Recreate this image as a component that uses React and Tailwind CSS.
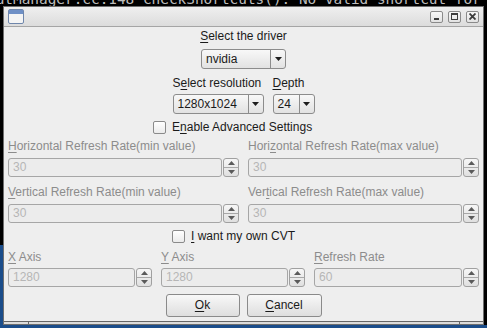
import React from 'react';

function Mn({ children }) {
  return <span className="underline decoration-1 underline-offset-[2px]">{children}</span>;
}

function Arrow({ up, color = '#1e1e1e' }) {
  return (
    <svg width="7" height="4" viewBox="0 0 7 4">
      <path d={up ? 'M0 4h7L3.5 0z' : 'M0 0h7L3.5 4z'} fill={color} />
    </svg>
  );
}

function Combo({ value, className = '' }) {
  return (
    <div className={`flex h-[20px] rounded-[3px] border border-[#8c8c8c] bg-linear-to-b from-[#f8f8f8] to-[#e2e2e2] ${className}`}>
      <div className="flex-1 pl-[4px] text-[12px] leading-[18px] text-[#1a1a1a]">{value}</div>
      <div className="flex w-[15px] items-center justify-center border-l border-[#8c8c8c]">
        <Arrow />
      </div>
    </div>
  );
}

function Spin({ value }) {
  return (
    <div className="flex h-[19px]">
      <div className="flex-1 rounded-[3px] border border-[#a6a6a6] bg-[#ececec] pl-[4px] text-[12px] leading-[17px] text-[#b6b6b6]">
        {value}
      </div>
      <div className="ml-[1px] flex w-[16px] flex-col overflow-hidden rounded-[3px] border border-[#a0a0a0] bg-linear-to-b from-[#f6f6f6] to-[#e0e0e0]">
        <div className="flex flex-1 items-center justify-center border-b border-[#a8a8a8]">
          <Arrow up color="#5a5a5a" />
        </div>
        <div className="flex flex-1 items-center justify-center">
          <Arrow color="#5a5a5a" />
        </div>
      </div>
    </div>
  );
}

function Check() {
  return <div className="h-[13px] w-[13px] rounded-[2px] border border-[#8a8a8a] bg-linear-to-b from-white to-[#ebebeb]" />;
}

function WinButton({ children }) {
  return (
    <div className="flex h-[12px] w-[13px] items-center justify-center rounded-[2px] border border-[#8a8a8a] bg-linear-to-b from-[#f7f7f7] to-[#e2e2e2]">
      {children}
    </div>
  );
}

export default function App() {
  return (
    <div className="relative h-[328px] w-[487px] overflow-hidden bg-black font-['Liberation_Sans',Arial,sans-serif]">
      {/* terminal behind the window */}
      <div className="absolute left-[-13px] top-[-10px] whitespace-pre font-['DejaVu_Sans_Mono',monospace] text-[14.4px] leading-[18px] text-[#bdbdbd]">
        cutManager.cc:148 checkShortcuts(): No valid shortcut for r
      </div>
      {/* desktop */}
      <div className="absolute bottom-0 left-0 h-[3px] w-full bg-[#1b4d8a]" />
      <div className="absolute bottom-0 left-0 top-[245px] w-[3px] bg-[#1b4d8a]" />

      {/* window */}
      <div className="absolute left-[3px] top-[6px] flex h-[319px] w-[481px] flex-col border border-[#6f6f6f] bg-[#eeeeee] text-[#1a1a1a]">
        {/* title bar */}
        <div className="flex h-[20px] items-center justify-between border-b border-[#a5a5a5] bg-linear-to-b from-[#efefef] to-[#dcdcdc] pl-[4px] pr-[4px]">
          <svg width="16" height="15" viewBox="0 0 16 15">
            <rect x="0.5" y="0.5" width="15" height="14" rx="1.5" fill="#f4f4f4" stroke="#6f86ab" />
            <rect x="1" y="1" width="14" height="4" fill="#6f90c6" />
          </svg>
          <div className="flex gap-[5px]">
            <WinButton>
              <svg width="7" height="8" viewBox="0 0 7 8">
                <rect x="1" y="5" width="5" height="2" fill="#3c3c3c" />
              </svg>
            </WinButton>
            <WinButton>
              <svg width="7" height="7" viewBox="0 0 7 7">
                <rect x="0.5" y="0.5" width="6" height="6" fill="none" stroke="#3c3c3c" />
                <rect x="0" y="0" width="7" height="2" fill="#3c3c3c" />
              </svg>
            </WinButton>
            <WinButton>
              <svg width="7" height="7" viewBox="0 0 7 7">
                <path d="M0.5 0.5l6 6M6.5 0.5l-6 6" stroke="#3c3c3c" strokeWidth="1.8" />
              </svg>
            </WinButton>
          </div>
        </div>

        {/* body */}
        <div className="flex flex-1 flex-col text-[12px] leading-[15px]">
          <div className="mt-[2px] text-center">
            <Mn>S</Mn>elect the driver
          </div>
          <div className="mt-[5px] flex justify-center">
            <Combo value="nvidia" className="w-[85px]" />
          </div>

          <div className="mt-[7px] flex justify-center gap-[9px]">
            <div className="flex w-[91px] flex-col">
              <div className="whitespace-nowrap">
                S<Mn>e</Mn>lect resolution
              </div>
              <Combo value="1280x1024" className="mt-[3px]" />
            </div>
            <div className="flex w-[42px] flex-col">
              <div>
                <Mn>D</Mn>epth
              </div>
              <Combo value="24" className="mt-[3px]" />
            </div>
          </div>

          <div className="mt-[6px] flex items-center gap-[6px] pl-[149px]">
            <Check />
            <span>
              E<Mn>n</Mn>able Advanced Settings
            </span>
          </div>

          <div className="mt-[4px] grid grid-cols-2 gap-x-[9px] px-[4px] text-[#8c8c8c]">
            <div>
              <Mn>H</Mn>orizontal Refresh Rate(min value)
            </div>
            <div>
              Hori<Mn>z</Mn>ontal Refresh Rate(max value)
            </div>
            <div className="mt-[4px]">
              <Spin value="30" />
            </div>
            <div className="mt-[4px]">
              <Spin value="30" />
            </div>
            <div className="mt-[8px]">
              <Mn>V</Mn>ertical Refresh Rate(min value)
            </div>
            <div className="mt-[8px]">
              Ver<Mn>t</Mn>ical Refresh Rate(max value)
            </div>
            <div className="mt-[4px]">
              <Spin value="30" />
            </div>
            <div className="mt-[4px]">
              <Spin value="30" />
            </div>
          </div>

          <div className="mt-[6px] flex items-center gap-[6px] pl-[168px]">
            <Check />
            <span>
              <Mn>I</Mn> want my own CVT
            </span>
          </div>

          <div className="mt-[6px] grid grid-cols-[144px_144px_1fr] gap-x-[9px] px-[4px] text-[#8c8c8c]">
            <div>
              <Mn>X</Mn> Axis
            </div>
            <div>
              <Mn>Y</Mn> Axis
            </div>
            <div>
              <Mn>R</Mn>efresh Rate
            </div>
            <div className="mt-[3px]">
              <Spin value="1280" />
            </div>
            <div className="mt-[3px]">
              <Spin value="1280" />
            </div>
            <div className="mt-[3px]">
              <Spin value="60" />
            </div>
          </div>

          <div className="mt-[7px] flex justify-center gap-[7px]">
            <button className="h-[23px] w-[74px] rounded-[3px] border border-[#8a8a8a] bg-linear-to-b from-[#f8f8f8] to-[#dedede] text-[12px] text-[#1a1a1a]">
              <Mn>O</Mn>k
            </button>
            <button className="h-[23px] w-[75px] rounded-[3px] border border-[#8a8a8a] bg-linear-to-b from-[#f8f8f8] to-[#dedede] text-[12px] text-[#1a1a1a]">
              <Mn>C</Mn>ancel
            </button>
          </div>

          {/* status strip */}
          <div className="mt-auto flex h-[3px] border-t border-[#666666] bg-[#dcdcdc]">
            <div className="w-[25px] border-r border-[#666666]" />
            <div className="flex-1" />
            <div className="w-[24px] border-l border-[#666666]" />
          </div>
        </div>
      </div>
    </div>
  );
}
